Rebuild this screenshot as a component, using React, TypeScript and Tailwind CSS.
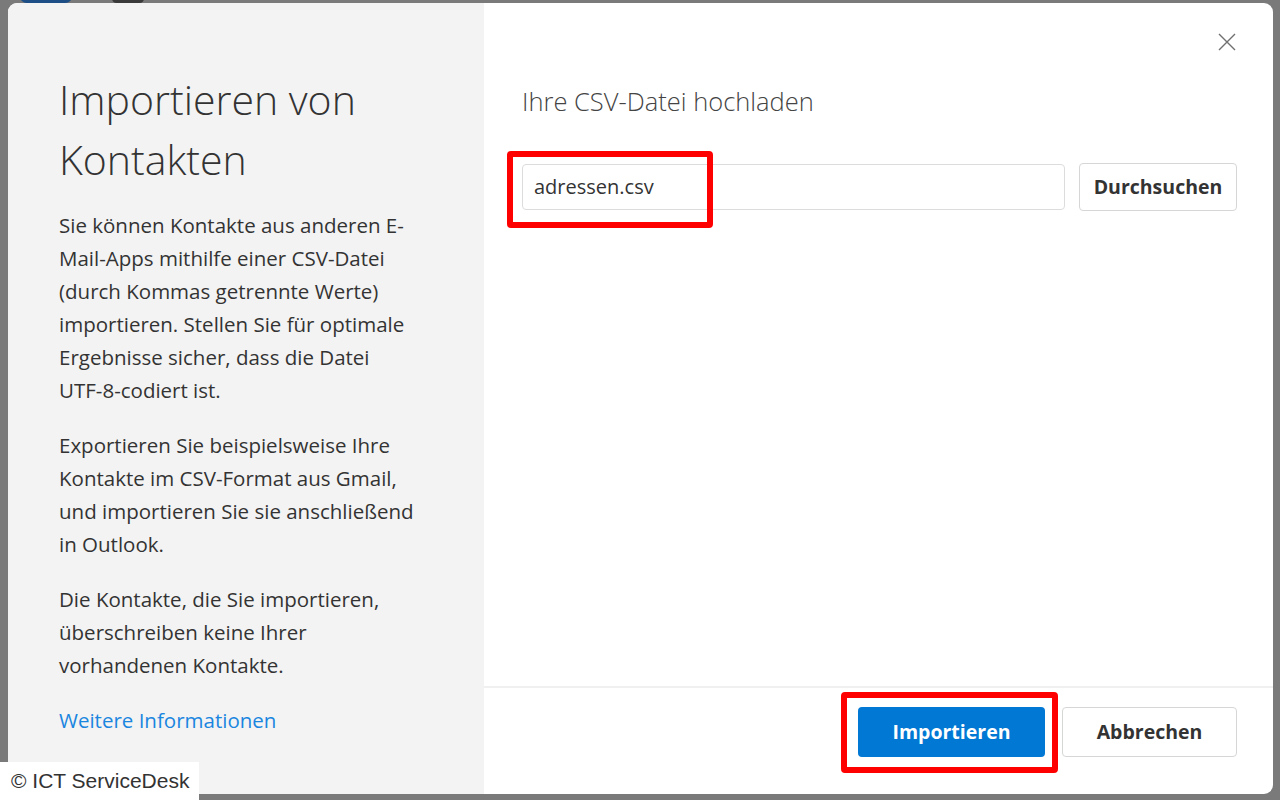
import React from "react";

const FONT = { fontFamily: '"Open Sans", "Noto Sans", sans-serif' };

function CloseIcon() {
  return (
    <svg width="20" height="20" viewBox="0 0 20 20" fill="none" stroke="#707070" strokeWidth="1.4">
      <path d="M2 2 L18 18 M18 2 L2 18" />
    </svg>
  );
}

// red annotation frame drawn over a control
function Marker({ className }: { className: string }) {
  return <div className={`absolute border-[6px] border-[#ff0000] rounded-[4px] pointer-events-none ${className}`} />;
}

export default function App() {
  return (
    <div className="relative w-[1280px] h-[800px] overflow-hidden bg-[#7a7a7a] pt-[3px] pl-[8px]" style={FONT}>
      {/* bits of the page behind the overlay */}
      <div className="absolute left-[20px] top-[-10px] w-[52px] h-[13px] rounded-full bg-[#1d4f86]" />
      <div className="absolute left-[112px] top-[-6px] w-[32px] h-[9px] rounded-full bg-[#3a3a3a]" />

      <div className="flex w-[1265px] h-[791px] rounded-[9px] overflow-hidden bg-white">
        <aside className="w-[476px] shrink-0 bg-[#f3f3f3] pl-[51px] pr-[61px] pt-[66px]">
          <h1 className="text-[41px] leading-[60px] font-light text-[#333]">Importieren von Kontakten</h1>
          <div className="mt-[20px] flex flex-col gap-[22px] text-[20.5px] leading-[33px] text-[#333]">
            <p>
              Sie können Kontakte aus anderen E-Mail-Apps mithilfe einer CSV-Datei (durch Kommas getrennte Werte)
              importieren. Stellen Sie für optimale Ergebnisse sicher, dass die Datei{" "}
              <span className="whitespace-nowrap">UTF-8-codiert</span> ist.
            </p>
            <p>
              Exportieren Sie beispielsweise Ihre Kontakte im CSV-Format aus Gmail, und importieren Sie sie anschließend
              in Outlook.
            </p>
            <p>Die Kontakte, die Sie importieren, überschreiben keine Ihrer vorhandenen Kontakte.</p>
            <p className="text-[#1a86e0]">Weitere Informationen</p>
          </div>
        </aside>

        <section className="flex-1 flex flex-col">
          <div className="flex-1 flex flex-col pl-[38px] pr-[36px] pt-[29px]">
            <div className="flex justify-end">
              <button className="p-0">
                <CloseIcon />
              </button>
            </div>
            <h2 className="mt-[34px] text-[25.5px] leading-[30px] font-light text-[#444]">Ihre CSV-Datei hochladen</h2>
            <div className="mt-[48px] flex gap-[14px]">
              <div className="relative flex-1">
                <div className="h-[46px] border border-[#dcdcdc] rounded-[4px] flex items-center px-[11px] text-[20px] text-[#333]">
                  adressen.csv
                </div>
                <Marker className="left-[-15px] top-[-13px] w-[206px] h-[77px]" />
              </div>
              <button className="w-[158px] h-[48px] -mt-[1px] border border-[#d6d6d6] rounded-[4px] text-[19.5px] font-bold text-[#333] bg-white">
                Durchsuchen
              </button>
            </div>
          </div>
          <footer className="h-[108px] border-t-2 border-[#f0f0f0] flex justify-end items-start pt-[19px] pr-[36px] gap-[17px]">
            <div className="relative">
              <button className="w-[187px] h-[50px] rounded-[4px] bg-[#0078d4] text-white text-[19.5px] font-bold">
                Importieren
              </button>
              <Marker className="left-[-17px] top-[-15px] w-[217px] h-[81px]" />
            </div>
            <button className="w-[175px] h-[50px] rounded-[4px] border border-[#d6d6d6] bg-white text-[19.5px] font-bold text-[#333]">
              Abbrechen
            </button>
          </footer>
        </section>
      </div>

      <div
        className="absolute left-0 bottom-0 w-[199px] h-[38px] bg-white flex items-center pl-[11px] text-[21px] text-[#333]"
        style={{ fontFamily: '"Liberation Sans", Arial, sans-serif' }}
      >
        © ICT ServiceDesk
      </div>
    </div>
  );
}
